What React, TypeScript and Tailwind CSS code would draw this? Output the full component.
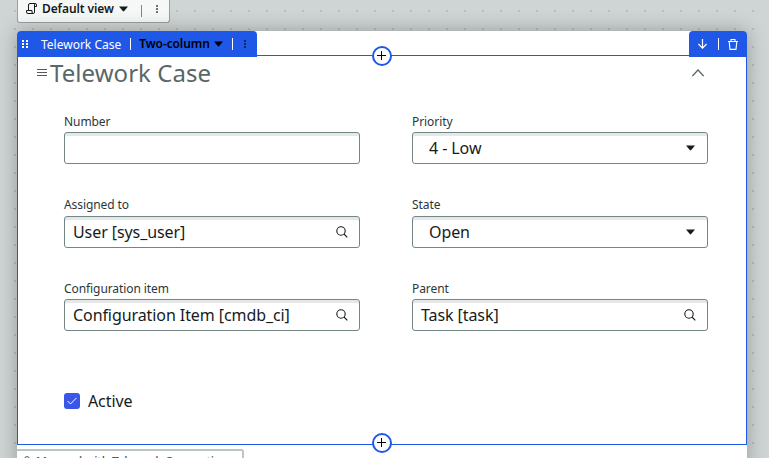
import React from "react";

function Caret({ className = "" }: { className?: string }) {
  return (
    <svg className={className} width="9" height="6" viewBox="0 0 9 6" fill="currentColor">
      <path d="M0 0.5H9L5.2 5Q4.5 5.8 3.8 5Z" />
    </svg>
  );
}

function Dots({ className = "" }: { className?: string }) {
  return (
    <svg className={className} width="2" height="8" viewBox="0 0 2 8" fill="currentColor">
      <rect width="2" height="2" />
      <rect y="3" width="2" height="2" />
      <rect y="6" width="2" height="2" />
    </svg>
  );
}

function Search() {
  return (
    <svg width="12" height="12" viewBox="0 0 12 12" fill="none" stroke="#161b1c" strokeWidth="1.1">
      <circle cx="5" cy="5" r="4.2" />
      <path d="M8 8L11.3 11.3" />
    </svg>
  );
}

function AddButton({ className }: { className: string }) {
  return (
    <button className={`absolute left-[355px] z-20 flex size-5 items-center justify-center rounded-full border-2 border-[#1f58e7] bg-white ${className}`}>
      <svg className="mr-px mb-px shrink-0" width="9" height="9" viewBox="0 0 9 9" stroke="#000" strokeWidth="1">
        <path d="M4.5 0V9M0 4.5H9" />
      </svg>
    </button>
  );
}

type FieldProps = { label: string; value?: string; kind: "text" | "select" | "reference"; labelClass?: string };

function Field({ label, value, kind, labelClass = "pt-px" }: FieldProps) {
  return (
    <div className="w-[296px]">
      <div className={`h-5 text-[12px] leading-[18px] tracking-[-0.08px] text-[#2b3739] ${labelClass}`}>{label}</div>
      <div className={`flex h-8 items-center justify-between rounded-[3px] border border-[#748586] bg-white text-[16px] text-[#161b1c] shadow-[inset_0_3px_0_#e6e8e8] ${kind === "select" ? "pr-3 pl-4" : "pr-[11px] pl-2"}`}>
        <span className="tracking-[-0.08px]">{value}</span>
        {kind === "select" && <Caret />}
        {kind === "reference" && <Search />}
      </div>
    </div>
  );
}

export default function App() {
  return (
    <div className="h-[458px] w-[769px] overflow-hidden bg-[#cfd5d4] bg-[radial-gradient(circle,#b6bcbc_1.3px,transparent_1.3px)] bg-[size:18px_18px] bg-[position:6px_2px] font-['Noto_Sans','Open_Sans',sans-serif]">
      <div className="ml-[17px] flex h-[23px] w-[153px] items-center rounded-b-[3px] border border-t-0 border-[#999e9e] bg-[#f6f8f8] pb-[5px] pl-2 text-[#161b1c]">
        <svg width="11" height="11" viewBox="0 0 11 11" fill="none" stroke="currentColor">
          <path d="M2.5 7.5V2Q2.5 .5 4 .5H9Q10.5 .5 10.5 2V3.5H8.5M9 .5Q8.5 1 8.5 2V9Q8.5 10.5 7.3 10.5H2Q.5 10.5 .5 9V7.5H6V9Q6 10.5 7.3 10.5" />
        </svg>
        <span className="ml-[5px] text-[12px] font-semibold tracking-[-0.1px] whitespace-nowrap">Default view</span>
        <Caret className="ml-[5px]" />
        <span className="mt-1 ml-[13px] h-3 w-px bg-[#808687]" />
        <Dots className="ml-[14px] text-[#6d7475]" />
      </div>

      <main className="relative mt-2 ml-[17px] h-[440px] w-[730px] rounded-t-[4px] bg-white shadow-[0_0_20px_rgba(0,0,0,0.28)]">
        <div className="relative z-10 flex h-6 items-start justify-between">
          <div className="flex h-[26px] w-[240px] items-center rounded-t-[4px] bg-[#1f58e7] pl-[5px] text-[12px] text-white">
            <span className="flex gap-0.5"><Dots /><Dots /></span>
            <span className="ml-[13px] pt-px whitespace-nowrap">Telework Case</span>
            <span className="ml-[9px] h-3 w-px bg-white" />
            <span className="ml-2 font-semibold tracking-[-0.1px] whitespace-nowrap text-black">Two-column</span>
            <Caret className="ml-1 text-black" />
            <span className="ml-[9px] h-3 w-px bg-white" />
            <Dots className="ml-[11px] text-[#0d2766]" />
          </div>
          <div className="flex h-[26px] w-[58px] items-center rounded-t-[4px] bg-[#1f58e7] pl-[9px] text-white">
            <svg width="9" height="10" viewBox="0 0 9 10" fill="none" stroke="currentColor" strokeWidth="1.2">
              <path d="M4.5 0V9M.4 5L4.5 9.2L8.6 5" />
            </svg>
            <span className="ml-[11px] h-3 w-px bg-white" />
            <svg className="ml-[9px]" width="10" height="11" viewBox="0 0 10 11" fill="none" stroke="currentColor" strokeWidth="1.1">
              <path d="M0 2.5H10M3 2.5V.5H7V2.5M1.2 2.5L2 10.4H8L8.8 2.5" />
            </svg>
          </div>
        </div>

        <section className="h-[390px] border border-[#1f58e7]">
          <div className="flex h-[34px] items-center justify-between pr-[42px] pl-[19px]">
            <div className="flex items-center">
              <svg className="mb-px" width="10" height="7" viewBox="0 0 10 7" stroke="#4f5b5d"><path d="M0 .5H10M0 3.5H10M0 6.5H10" /></svg>
              <h1 className="ml-[3px] text-[24px] leading-[34px] tracking-[0.05px] text-[#586769]">Telework Case</h1>
            </div>
            <svg width="12" height="8" viewBox="0 0 12 8" fill="none" stroke="#566365" strokeWidth="1.2"><path d="M.4 7L6 1L11.6 7" /></svg>
          </div>
          <div className="ml-[46px] grid grid-cols-[296px_296px] grid-rows-[84px_83px_83px] gap-x-[52px] pt-[22px]">
            <Field label="Number" kind="text" />
            <Field label="Priority" value="4 - Low" kind="select" />
            <Field label="Assigned to" value="User [sys_user]" kind="reference" labelClass="pt-0" />
            <Field label="State" value="Open" kind="select" labelClass="pt-0" />
            <Field label="Configuration item" value="Configuration Item [cmdb_ci]" kind="reference" />
            <Field label="Parent" value="Task [task]" kind="reference" />
          </div>
          <label className="mt-[27px] ml-[46px] flex h-6 items-center gap-2 text-[16px] tracking-[-0.1px] text-[#161b1c]">
            <span className="flex size-4 items-center justify-center rounded-[3px] bg-[#3a56e8]">
              <svg width="10" height="8" viewBox="0 0 10 8" fill="none" stroke="white"><path d="M.5 4L3.5 7L9.5 .8" /></svg>
            </span>
            Active
          </label>
        </section>
        <AddButton className="top-[15px]" />
        <AddButton className="top-[402px]" />
        <div className="mt-1 flex h-7 w-[227px] items-start rounded-tr-[3px] border-2 border-l-0 border-[#bcc4c4] pt-[2px] pl-[7px] text-[12px] leading-[18px] whitespace-nowrap text-[#4f5b5d]">
          <svg className="mt-[3px] mr-[2px] shrink-0" width="10" height="11" viewBox="0 0 10 11" fill="none" stroke="currentColor">
            <circle cx="3" cy="3" r="2.4" /><path d="M5 5L8 8" />
          </svg>
          <span className="font-medium tracking-[-0.2px]">Mapped with Telework Connection</span>
        </div>
      </main>
    </div>
  );
}
